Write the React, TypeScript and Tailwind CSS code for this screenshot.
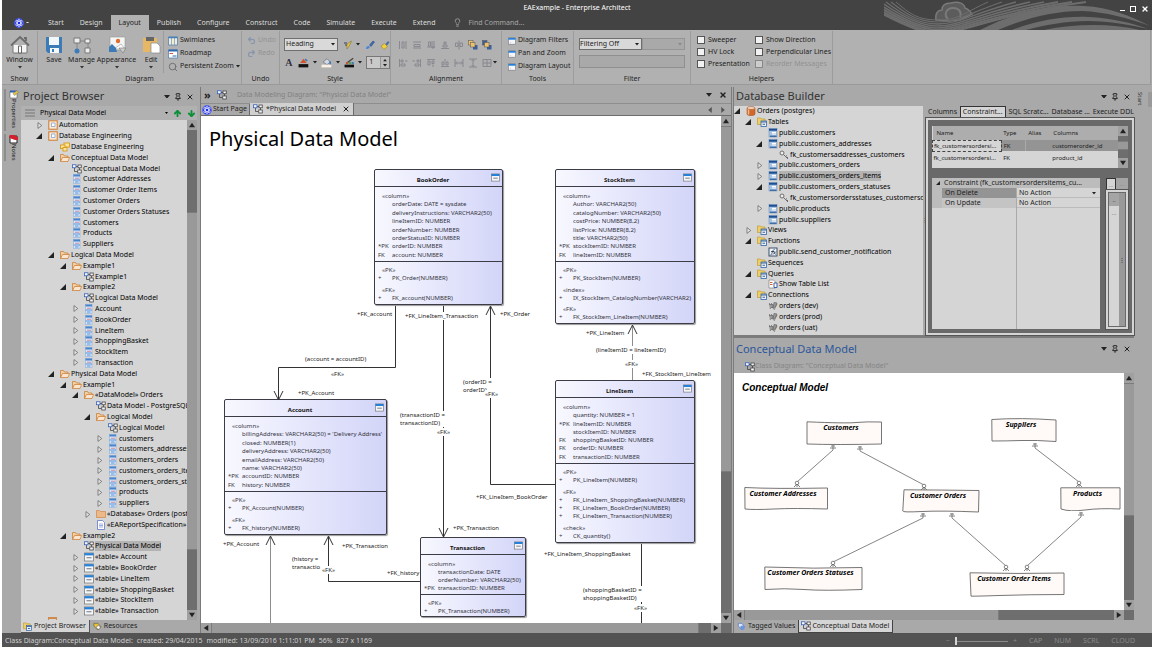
import type { ReactNode } from 'react';
import { ArrowDown, ArrowUp, Lightbulb, Pin, Redo2, Search, Undo2, X } from 'lucide-react';
import clsx from 'clsx';

type IconName =
  | 'diagram' | 'class' | 'folder' | 'folderClosed' | 'model' | 'package' | 'table' | 'doc' | 'logo'
  | 'db' | 'dbFolder' | 'dbTable' | 'key' | 'func' | 'query' | 'plug' | 'window';

interface TreeNode {
  depth: number;
  icon: IconName;
  label: string;
  arrow?: 'open' | 'closed';
  selected?: boolean;
}

const node = (depth: number, icon: IconName, label: string, arrow?: 'open' | 'closed', selected = false): TreeNode => ({
  depth, icon, label, arrow, selected,
});

const PROJECT_TREE: TreeNode[] = [
  node(0, 'model', 'Automation', 'closed'),
  node(0, 'model', 'Database Engineering', 'open'),
  node(1, 'package', 'Database Engineering'),
  node(1, 'folder', 'Conceptual Data Model', 'open'),
  node(2, 'diagram', 'Conceptual Data Model'),
  node(2, 'class', 'Customer Addresses'),
  node(2, 'class', 'Customer Order Items'),
  node(2, 'class', 'Customer Orders'),
  node(2, 'class', 'Customer Orders Statuses'),
  node(2, 'class', 'Customers'),
  node(2, 'class', 'Products'),
  node(2, 'class', 'Suppliers'),
  node(1, 'folder', 'Logical Data Model', 'open'),
  node(2, 'folder', 'Example1', 'open'),
  node(3, 'diagram', 'Example1'),
  node(2, 'folder', 'Example2', 'open'),
  node(3, 'diagram', 'Logical Data Model'),
  node(3, 'class', 'Account', 'closed'),
  node(3, 'class', 'BookOrder', 'closed'),
  node(3, 'class', 'LineItem', 'closed'),
  node(3, 'class', 'ShoppingBasket', 'closed'),
  node(3, 'class', 'StockItem', 'closed'),
  node(3, 'class', 'Transaction', 'closed'),
  node(1, 'folder', 'Physical Data Model', 'open'),
  node(2, 'folder', 'Example1', 'open'),
  node(3, 'folder', '«DataModel» Orders', 'open'),
  node(4, 'diagram', 'Data Model - PostgreSQL'),
  node(4, 'folder', 'Logical Model', 'open'),
  node(5, 'diagram', 'Logical Model'),
  node(5, 'class', 'customers', 'closed'),
  node(5, 'class', 'customers_addresses', 'closed'),
  node(5, 'class', 'customers_orders', 'closed'),
  node(5, 'class', 'customers_orders_items', 'closed'),
  node(5, 'class', 'customers_orders_statuses', 'closed'),
  node(5, 'class', 'products', 'closed'),
  node(5, 'class', 'suppliers', 'closed'),
  node(4, 'folderClosed', '«Database» Orders (postgres)', 'closed'),
  node(4, 'doc', '«EAReportSpecification» -'),
  node(2, 'folder', 'Example2', 'open'),
  node(3, 'diagram', 'Physical Data Model', undefined, true),
  node(3, 'table', '«table» Account', 'closed'),
  node(3, 'table', '«table» BookOrder', 'closed'),
  node(3, 'table', '«table» LineItem', 'closed'),
  node(3, 'table', '«table» ShoppingBasket', 'closed'),
  node(3, 'table', '«table» StockItem', 'closed'),
  node(3, 'table', '«table» Transaction', 'closed'),
];

const DB_TREE: TreeNode[] = [
  node(0, 'db', 'Orders (postgres)', 'open'),
  node(1, 'dbFolder', 'Tables', 'open'),
  node(2, 'dbTable', 'public.customers'),
  node(2, 'dbTable', 'public.customers_addresses', 'open'),
  node(3, 'key', 'fk_customersaddresses_customers'),
  node(2, 'dbTable', 'public.customers_orders', 'closed'),
  node(2, 'dbTable', 'public.customers_orders_items', 'closed', true),
  node(2, 'dbTable', 'public.customers_orders_statuses', 'open'),
  node(3, 'key', 'fk_customersordersstatuses_customersorders'),
  node(2, 'dbTable', 'public.products', 'closed'),
  node(2, 'dbTable', 'public.suppliers'),
  node(1, 'dbFolder', 'Views', 'closed'),
  node(1, 'dbFolder', 'Functions', 'open'),
  node(2, 'func', 'public.send_customer_notification'),
  node(1, 'dbFolder', 'Sequences'),
  node(1, 'dbFolder', 'Queries', 'open'),
  node(2, 'query', 'Show Table List'),
  node(1, 'dbFolder', 'Connections', 'open'),
  node(2, 'plug', 'orders (dev)'),
  node(2, 'plug', 'orders (prod)'),
  node(2, 'plug', 'orders (uat)'),
];

const Icon = ({ name, className = 'size-[10px]' }: { name: IconName; className?: string }) => (
  <svg viewBox="0 0 20 20" className={clsx('shrink-0', className)} aria-hidden="true">
    {name === 'diagram' && (
      <g fill="#f4f6fb" stroke="#444" strokeWidth="1.6">
        <path d="M7 5h5M5 8v7h6M15 8v4" fill="none" />
        <rect x="1" y="1.5" width="7" height="6" stroke="#3a62b8" />
        <rect x="12" y="2" width="6.5" height="5.5" />
        <rect x="11.5" y="12" width="7" height="6" />
      </g>
    )}
    {name === 'class' && (
      <g>
        <rect x="3" y="1" width="13" height="18" fill="#d6e6fa" stroke="#7fa8d8" />
        <path d="M3 3h13" stroke="#4a84cc" strokeWidth="4" />
        <path d="M6 8.500h8" stroke="#d88a96" strokeWidth="2" />
        <path d="M3 12h13" stroke="#5b93d4" strokeWidth="2" />
        <path d="M6 16h7" stroke="#5b93d4" strokeWidth="2" />
      </g>
    )}
    {name === 'folder' && (
      <g stroke="#c9772c" strokeWidth="1.4" strokeLinejoin="round">
        <path d="M1 17V3h6l2 3h7v4" fill="#f2cfa5" />
        <path d="M1 17l4-8h14l-3 8z" fill="#fae6cf" />
      </g>
    )}
    {name === 'folderClosed' && <path d="M1 17V3h6l2 2h10v12z" fill="#ebb98a" stroke="#cf8748" strokeWidth="1.4" />}
    {name === 'model' && (
      <g>
        <rect x="1.5" y="1.5" width="17" height="17" fill="#fbe9d6" stroke="#d08a4c" strokeWidth="2.4" />
        <path d="M7 6h7v7H7z" fill="#fff" stroke="#7f9fc9" strokeWidth="1.5" />
      </g>
    )}
    {name === 'package' && (
      <g fill="#ffe49a" stroke="#d79a1c" strokeWidth="1.8">
        <rect x="8" y="2" width="11" height="8" />
        <rect x="1" y="6" width="9" height="7" />
        <rect x="6" y="11" width="8" height="7" />
      </g>
    )}
    {(name === 'table' || name === 'window') && (
      <g>
        <rect x="1" y="2" width="18" height="16" fill="#f3f6fb" stroke="#777" strokeWidth="1.5" />
        <path d="M1 4.500h18" stroke="#2580d8" strokeWidth="4.5" />
        <path d={name === 'table' ? 'M5 11.500h10' : 'M5 14h1'} stroke="#666" strokeWidth="1.8" />
      </g>
    )}
    {name === 'doc' && (
      <g>
        <path d="M3 1h10l4 4v14H3z" fill="#fff" stroke="#5a6fc0" strokeWidth="1.5" />
        <path d="M6 8h8M6 11h8M6 14h8" stroke="#7d90d8" strokeWidth="1.5" />
      </g>
    )}
    {name === 'logo' && (
      <g fill="none" stroke="#dfe4ff" strokeWidth="1.5">
        <circle cx="10" cy="10" r="9" fill="#1d2be0" stroke="#5b6bff" />
        <ellipse cx="10" cy="10" rx="7.5" ry="3.2" transform="rotate(35 10 10)" />
        <ellipse cx="10" cy="10" rx="7.5" ry="3.2" transform="rotate(-35 10 10)" />
        <ellipse cx="10" cy="10" rx="7.5" ry="3.2" transform="rotate(90 10 10)" />
      </g>
    )}
    {name === 'db' && (
      <g>
        <path d="M2 4v12c0 4 16 4 16 0V4z" fill="#d0692a" stroke="#9c4714" />
        <path d="M5 6v11" stroke="#f5b68c" strokeWidth="3" />
        <ellipse cx="10" cy="4" rx="8" ry="3" fill="#f6d4bd" stroke="#9c4714" />
      </g>
    )}
    {name === 'dbFolder' && (
      <g>
        <path d="M1 15V2h6l2 2h7v11z" fill="#f0cf62" stroke="#b8902a" strokeWidth="1.2" />
        <rect x="8" y="8" width="11" height="11" fill="#e8f0fa" stroke="#35639f" strokeWidth="1.6" />
        <path d="M8 10h11M11 14.500h5" stroke="#35639f" strokeWidth="2" />
      </g>
    )}
    {name === 'dbTable' && (
      <g>
        <rect x="2" y="1" width="16" height="17" fill="#a9c4e4" stroke="#5f86b8" />
        <path d="M2 3.500h16" stroke="#1f4f91" strokeWidth="4" />
        <path d="M8 9h8M8 12h8" stroke="#fff" strokeWidth="2" />
        <path d="M4 16.500h13" stroke="#35639f" strokeWidth="2.5" />
      </g>
    )}
    {name === 'key' && (
      <g fill="none" stroke="#6d6d6d" strokeWidth="2">
        <circle cx="6" cy="6" r="4" fill="#eee" />
        <path d="M9 9l9 9M13 13l3-2M16 16l2-2" />
      </g>
    )}
    {name === 'func' && (
      <g>
        <rect x="2" y="2" width="16" height="16" fill="#eef3fa" stroke="#2a3f5c" strokeWidth="1.8" />
        <path d="M5 16c3 1 4-12 8-11M6 9h7M10 15l6-6M11 9l4 6" fill="none" stroke="#22364f" strokeWidth="1.6" />
      </g>
    )}
    {name === 'query' && (
      <g>
        <path d="M2 2h9l4 4v12H2z" fill="#fff" stroke="#777" strokeWidth="1.3" />
        <path d="M4 7h5M4 11h5" stroke="#d0643a" strokeWidth="2" />
        <path d="M12 8h6v9h-6z" fill="#fff" stroke="#3b5fa8" strokeWidth="2" />
      </g>
    )}
    {name === 'plug' && (
      <g fill="#9a9a9a" stroke="#666" strokeWidth="1.4">
        <path d="M2 7h8v6H6L4 16M12 3l6 1-3 7-5 4z" />
        <path d="M3 4v3M7 4v3M12 18l6-12" />
      </g>
    )}
  </svg>
);

const Caret = ({ className = 'w-[4px]' }: { className?: string }) => (
  <svg viewBox="0 0 8 5" className={clsx('shrink-0', className)} aria-hidden="true">
    <path d="M0 0h8L4 5z" fill="currentColor" />
  </svg>
);

const Tree = ({ nodes, step }: { nodes: TreeNode[]; step: number }) => (
  <ul className="flex min-w-0 flex-1 flex-col">
    {nodes.map((n, i) => (
      <li
        key={i}
        className="flex min-h-0 flex-1 items-center overflow-hidden whitespace-nowrap"
        style={{ paddingLeft: n.depth * step }}
      >
        <span className="flex w-3 shrink-0 items-center">
          {n.arrow === 'open' && (
            <svg viewBox="0 0 10 10" className="size-[6px]"><path d="M10 0v10H0z" fill="#222" /></svg>
          )}
          {n.arrow === 'closed' && (
            <svg viewBox="0 0 10 12" className="ml-px h-[7px] w-[6px]"><path d="M1.500 1v10L8 6z" fill="#e4e4e4" stroke="#666" strokeWidth="1.3" /></svg>
          )}
        </span>
        <Icon name={n.icon} />
        <span className={clsx('ml-px leading-[10px]', n.selected && 'bg-[#b3b3b3]')}>{n.label}</span>
      </li>
    ))}
  </ul>
);

const ScrollArrow = ({ dir }: { dir: 'up' | 'down' | 'left' | 'right' }) => (
  <button type="button" aria-label={`Scroll ${dir}`} className="flex size-[10px] shrink-0 items-center justify-center bg-[#a0a0a0]">
    <svg viewBox="0 0 8 8" className={clsx('size-[6px]', { 'rotate-180': dir === 'down', '-rotate-90': dir === 'left', 'rotate-90': dir === 'right' })}>
      <path d="M0 7h8L4 1z" fill="#222" />
    </svg>
  </button>
);

const VScroll = ({ before = 'flex-none', thumb, after }: { before?: string; thumb: string; after: string }) => (
  <div className="flex w-[10px] shrink-0 flex-col bg-[#6e6e6e]">
    <ScrollArrow dir="up" />
    <div className={before} />
    <div className={clsx('border-y border-[#7c7c7c] bg-[#999]', thumb)} />
    <div className={after} />
    <ScrollArrow dir="down" />
  </div>
);

const HScroll = ({ thumb, after }: { thumb: string; after: string }) => (
  <div className="mr-[10px] flex h-[10px] shrink-0 bg-[#6e6e6e] outline-[#6e6e6e]">
    <ScrollArrow dir="left" />
    <div className={clsx('border-x border-[#7c7c7c] bg-[#999]', thumb)} />
    <div className={after} />
    <ScrollArrow dir="right" />
  </div>
);

const PanelButtons = () => (
  <div className="flex items-center gap-1 pr-[3px] text-[#222]">
    <button type="button" aria-label="Panel options"><Caret className="w-[6px]" /></button>
    <button type="button" aria-label="Pin panel"><Pin className="size-[8px]" strokeWidth={3} /></button>
    <button type="button" aria-label="Close panel"><X className="size-[8px]" strokeWidth={3} /></button>
  </div>
);

/* ---------- title bar and ribbon ---------- */

const MENU = ['Start', 'Design', 'Layout', 'Publish', 'Configure', 'Construct', 'Code', 'Simulate', 'Execute', 'Extend'];
const BOWLS = [0, 1, 2, 3, 4, 5, 6, 7];

const HeaderArt = () => (
  <svg viewBox="0 0 268 30" className="absolute right-0 top-0 h-[30px] w-[268px]" fill="none" aria-hidden="true">
    <path d="M52 20c-1-7 2-10 6-10 0-5 4-7 9-7 7-2 13 0 14 5 4 1 5 4 7 6l-12 6-12 1z" fill="#5c5c5c" stroke="#7a7a7a" strokeWidth="1.5" />
    <path d="M64 19c-5-5-1-11 5-11s9 4 7 9" stroke="#7a7a7a" strokeWidth="2" />
    <g stroke="#6d6d6d">
      {BOWLS.map(k => (
        <path
          key={k}
          d={`M${12 - 5 * k} 2C${26 - 4 * k} 14 34 ${20 + k * 2} 54 ${20 + k * 2}S${78 + 5 * k} 14 ${104 + 14 * k} 2`}
          strokeWidth={1 + k / 6}
        />
      ))}
    </g>
    <g fill="#6d6d6d">
      <path d="M96 30C130 12 168 4 200 6c26 1 46 10 66 20-22-8-44-14-68-15-30 0-58 8-84 19z" />
      <path d="M128 30c24-9 50-14 76-13 24 1 44 6 60 12-18-4-38-8-60-8-22 0-44 4-62 9z" />
      <path d="M160 30c30-6 66-7 96 0z" />
    </g>
  </svg>
);

const Header = () => (
  <header className="relative flex h-[30px] shrink-0 flex-col overflow-hidden bg-[#434343] text-[#dcdcdc]">
    <HeaderArt />
    <div className="relative flex h-[15px] items-center justify-center pt-[2px] text-[7px] text-white">
      <h1>EAExample - Enterprise Architect</h1>
      <div className="absolute right-[3px] flex items-center gap-[5px]">
        <button type="button" aria-label="Minimize"><span className="mt-[4px] block h-px w-[5px] bg-white" /></button>
        <button type="button" aria-label="Maximize"><span className="block size-[6px] border border-white" /></button>
        <button type="button" aria-label="Close"><X className="size-[8px]" strokeWidth={4} /></button>
      </div>
    </div>
    <nav className="relative flex h-[15px] items-center text-[7px]">
      <button type="button" className="flex w-[38px] items-center gap-[2px] pl-[12px]" aria-label="Application menu">
        <Icon name="logo" /><Caret className="w-[3px]" />
      </button>
      {MENU.map(m => (
        <button
          key={m}
          type="button"
          className={clsx('flex h-full items-center px-2 pt-[2px]', m === 'Layout' && 'bg-[#b1b1b1] text-[#1c1c1c]')}
        >
          {m}
        </button>
      ))}
      <Lightbulb className="ml-[10px] size-[9px] text-[#aaa]" />
      <input aria-label="Find command" placeholder="Find Command..." className="ml-[6px] w-[80px] bg-transparent pt-[2px] outline-none placeholder:text-[#a8a8a8]" />
    </nav>
  </header>
);

const Group = ({ title, width, children }: { title: string; width: string; children: ReactNode }) => (
  <section className={clsx('flex shrink-0 flex-col border-r border-[#9c9c9c]', width)}>
    <div className="flex h-[42px] min-w-0 shrink-0">{children}</div>
    <h2 className="text-center leading-[11px]">{title}</h2>
  </section>
);

const BigButton = ({ label, caret, width, children }: { label: string; caret?: boolean; width: string; children: ReactNode }) => (
  <button type="button" className={clsx('flex shrink-0 flex-col items-center self-start pt-1', width)}>
    <svg viewBox="0 0 20 20" className="size-[20px]" aria-hidden="true">{children}</svg>
    <span className="leading-[10px]">{label}</span>
    {caret && <Caret className="mt-px w-[4px] text-[#333]" />}
  </button>
);

const SmallButton = ({ icon, label, caret, className }: { icon: ReactNode; label: string; caret?: boolean; className?: string }) => (
  <button type="button" className={clsx('flex h-[13px] items-center gap-[2px] whitespace-nowrap', className)}>
    {icon}{label}{caret && <Caret className="w-[4px]" />}
  </button>
);

const ALIGN_ICONS = [
  'M3 2v16M8 4h4v12H8zM16 2v16', 'M2 16h16M4 9h12v4H4zM2 4h16', 'M2 14h16M5 4v8h4V4zM12 2v14h4V2',
  'M2 17h16M6 10h8v4H6zM8 4h4v4H8z', 'M10 1v18M3 6h5v7H3zM12 6h5v7h-5z',
];
const SPACE_ICONS = [
  'M3 2v16M6 4h4v4H6zM6 12h8v4H6zM14 6h5', 'M17 2v16M10 4h4v4h-4zM6 12h8v4H6zM1 6h5', 'M2 3h16M4 6h4v8H4zM12 6h4v5h-4zM14 13v5',
  'M2 17h16M4 8h4v6H4zM12 8h4v6h-4zM10 2v5', 'M2 2v16M18 2v16M3 10h14M6 7l-3 3 3 3M14 7l3 3-3 3', 'M2 2h16M2 18h16M10 3v14M7 6l3-3 3 3M7 14l3 3 3-3',
];

const LineIcon = ({ d }: { d: string }) => (
  <button type="button" aria-label="Align elements">
    <svg viewBox="0 0 20 20" className="size-[10px]"><path d={d} fill="none" stroke="#84848c" strokeWidth="1.8" /></svg>
  </button>
);

const StackIcon = ({ front }: { front?: boolean }) => (
  <button type="button" aria-label={front ? 'Bring to front' : 'Send to back'}>
    <svg viewBox="0 0 20 20" className="size-[10px]">
      <rect x="1" y="1" width="9" height="9" fill={front ? '#efc06a' : '#3b5f98'} stroke="#555" />
      <rect x="10" y="10" width="9" height="9" fill="#3b5f98" />
      <rect x="5" y="5" width="9" height="9" fill="#efc06a" stroke="#555" />
    </svg>
  </button>
);

const Check = ({ label, disabled }: { label: string; disabled?: boolean }) => (
  <label className={clsx('flex h-[12px] items-center gap-[3px] whitespace-nowrap', disabled && 'text-[#919191]')}>
    <input type="checkbox" disabled={disabled} className="size-[8px] shrink-0 appearance-none border border-[#555] bg-[#f2f2f2] disabled:border-[#888] disabled:bg-[#ccc]" />
    {label}
  </label>
);

const Ribbon = () => (
  <div className="mr-px flex h-[55px] shrink-0 border-b border-r border-[#9a9a9a] bg-[#b1b1b1] pt-px text-[7px] text-[#1e1e1e]">
    <Group title="Show" width="w-[36px]">
      <BigButton label="Window" caret width="w-full">
        <path d="M3 10v8h14v-8" fill="#f4f4f4" stroke="#777" />
        <path d="M1 10.500L10 2l9 8.500M14 3h2v3" fill="none" stroke="#6b6b6b" strokeWidth="1.8" />
        <path d="M8.500 11h3v7h-3z" fill="#fff" stroke="#666" />
      </BigButton>
    </Group>
    <Group title="Diagram" width="w-[204px]">
      <BigButton label="Save" width="w-[32px]">
        <path d="M2 2h16v16H4l-2-2z" fill="#3b7cb8" />
        <path d="M5 2h10v8H5zM6 13h9v5H6z" fill="#f4f7fa" />
        <path d="M8 14h2v3H8z" fill="#3b7cb8" />
      </BigButton>
      <BigButton label="Manage" caret width="w-[23px]">
        <path d="M8 6h7M5 8v6M16 8v6" stroke="#888" fill="none" />
        <path d="M2 3h6v5H2zM13 4h5v4h-5zM13 13h5v5h-5z" fill="#eee" stroke="#777" />
        <circle cx="5" cy="16" r="2.5" fill="#3b7cb8" />
      </BigButton>
      <BigButton label="Appearance" caret width="w-[47px]">
        <path d="M3 2h15v13H3z" fill="#f5f5f5" stroke="#999" strokeWidth=".6" />
        <path d="M7 14l7-5 4 5z" fill="#fff" stroke="#999" strokeWidth=".6" />
        <circle cx="11" cy="6" r="2.2" fill="#dd6f32" />
        <path d="M2 17v-5l3-3 4 4 1 4z" fill="#3b7cb8" />
        <path d="M12 13h7l-3 5z" fill="#ccc" stroke="#777" strokeWidth=".6" />
      </BigButton>
      <BigButton label="Edit" caret width="w-[22px]">
        <path d="M2 3h14v14H2z" fill="#e6b866" />
        <path d="M5 2h8v4H5z" fill="#666" />
        <path d="M10 8h6l3 3v7h-9z" fill="#fff" stroke="#888" strokeWidth=".7" />
      </BigButton>
      <div className="ml-px flex flex-col border-l border-[#9c9c9c] pl-1 pt-[3px]">
        <SmallButton
          label="Swimlanes"
          icon={<svg viewBox="0 0 20 20" className="size-[10px]"><path d="M1 2h18v16H1z" fill="#f3ecd2" stroke="#4b7fb8" strokeWidth="1.5" /><path d="M7 3v15M13 3v15" stroke="#6f9cc8" strokeWidth="1.5" /><path d="M1 3h18" stroke="#4b7fb8" strokeWidth="3" /></svg>}
        />
        <SmallButton
          label="Roadmap"
          icon={<svg viewBox="0 0 20 20" className="size-[10px]"><path d="M1 2h18v16H1z" fill="#fff" stroke="#4b7fb8" strokeWidth="1.5" /><path d="M1 3h18" stroke="#2f69ad" strokeWidth="4" /><path d="M3 9h7" stroke="#d05a4a" strokeWidth="2" /><path d="M9 14h8" stroke="#2f69ad" strokeWidth="2" /></svg>}
        />
        <SmallButton label="Persistent Zoom" caret icon={<Search className="size-[10px] text-[#666]" />} />
      </div>
    </Group>
    <Group title="Undo" width="w-[38px]">
      <div className="flex flex-col pl-[5px] pt-[3px] text-[#929292]">
        <SmallButton label="Undo" icon={<Undo2 className="size-[9px] text-[#8795ad]" strokeWidth={3} />} />
        <SmallButton label="Redo" icon={<Redo2 className="size-[9px] text-[#8795ad]" strokeWidth={3} />} />
      </div>
    </Group>
    <Group title="Style" width="w-[111px]">
      <div className="flex w-full flex-col gap-[5px] pl-1 pt-[7px]">
        <div className="flex h-[13px] items-center gap-[5px]">
          <div className="relative h-[13px] w-[54px]">
            <select aria-label="Style preset" className="size-full appearance-none border border-[#6f6f6f] bg-[#d9d9d9] pl-px">
              <option>Heading</option>
            </select>
            <Caret className="pointer-events-none absolute right-[3px] top-[5px] w-[4px]" />
          </div>
          <svg viewBox="0 0 20 20" className="size-[10px]"><path d="M2 6h6M4 10h6" stroke="#2d3f66" strokeWidth="2" /><path d="M8 18V8l9-6-4 9z" fill="#e6c33c" stroke="#7d6a2b" /></svg>
          <Caret className="-ml-[2px] w-[4px]" />
          <svg viewBox="0 0 20 20" className="size-[10px]"><path d="M9 10l7-8 3 2-7 9z" fill="#3c6db8" stroke="#27457a" /><path d="M2 18c0-5 3-7 6-6 3 2 1 6-6 6z" fill="#4c86d8" /></svg>
          <svg viewBox="0 0 20 20" className="size-[10px]"><path d="M10 9l6-7 3 3-6 7z" fill="#4d6ea5" /><path d="M2 12l7-5 6 6-7 6z" fill="#f0cf3b" stroke="#8d7820" /></svg>
        </div>
        <div className="flex h-[13px] items-center gap-1">
          <span className="w-[10px] text-center font-['Liberation_Serif',serif] text-[10px] font-bold text-[#334]">A</span>
          <svg viewBox="0 0 20 20" className="size-[11px]"><path d="M4 11l6-8 6 8z" fill="#d2502e" /><path d="M13 4l4 3" stroke="#3b7cb8" strokeWidth="3" /><path d="M1 13h18v6H1z" fill="#111" /></svg>
          <Caret />
          <svg viewBox="0 0 20 20" className="size-[11px]"><path d="M4 9l7-6 6 6-6 5z" fill="#cfd9e8" stroke="#555" /><path d="M17 8v6" stroke="#3b7cb8" strokeWidth="3" /><path d="M1 14h18v5H1z" fill="#fbf0e4" /></svg>
          <Caret />
          <svg viewBox="0 0 20 20" className="size-[11px]"><path d="M4 12L17 2" stroke="#444" strokeWidth="2.5" /><path d="M4 9h4v4H4z" fill="#d2502e" /><path d="M9 9h4v4H9z" fill="#4ca64c" /><path d="M14 9h4v4h-4z" fill="#3b7cb8" /><path d="M1 14h18v5H1z" fill="#111" /></svg>
          <Caret />
          <div className="flex h-[13px] w-[24px] border border-[#777] bg-[#c9c9c9]">
            <input aria-label="Line width" defaultValue="1" className="w-[13px] pl-[2px] outline-none" />
            <div className="flex flex-1 flex-col items-center justify-center gap-[3px] border-l border-[#999] bg-[#bdbdbd]">
              <Caret className="w-[4px] rotate-180" /><Caret className="w-[4px]" />
            </div>
          </div>
        </div>
      </div>
    </Group>
    <Group title="Alignment" width="w-[111px]">
      <div className="flex flex-col gap-[7px] pl-[7px] pt-2">
        <div className="flex h-[11px] items-center gap-1">
          {ALIGN_ICONS.map(d => <LineIcon key={d} d={d} />)}
          <StackIcon front /><StackIcon />
        </div>
        <div className="flex h-[11px] items-center gap-1">
          {SPACE_ICONS.map(d => <LineIcon key={d} d={d} />)}
          <LineIcon d="M2 3h16v14H2zM10 3v14M2 10h16" />
          <Caret className="-ml-[3px] w-[4px]" />
        </div>
      </div>
    </Group>
    <Group title="Tools" width="w-[72px]">
      <div className="flex flex-col pl-[6px] pt-[3px]">
        {['Diagram Filters', 'Pan and Zoom', 'Diagram Layout'].map(t => (
          <SmallButton key={t} label={t} icon={<Icon name="window" className="size-[8px]" />} />
        ))}
      </div>
    </Group>
    <Group title="Filter" width="w-[117px]">
      <div className="flex w-full flex-col gap-[5px] px-[5px] pt-[7px]">
        <div className="flex h-[12px]">
          <div className="relative w-[63px]">
            <select aria-label="Filter mode" className="block size-full appearance-none border border-[#6f6f6f] bg-[#d9d9d9]">
              <option>Filtering Off</option>
            </select>
            <Caret className="pointer-events-none absolute right-[3px] top-[5px] w-[4px]" />
          </div>
          <div className="relative flex-1">
            <select aria-label="Filter name" disabled className="block size-full appearance-none border border-[#959595] bg-[#a9a9a9]" />
            <Caret className="pointer-events-none absolute right-[3px] top-[5px] w-[4px] text-[#888]" />
          </div>
        </div>
        <input aria-label="Filter text" disabled className="h-[13px] w-full border border-[#8f8f8f] bg-[#a9a9a9]" />
      </div>
    </Group>
    <Group title="Helpers" width="w-[142px]">
      <div className="grid grid-cols-[56px_1fr] content-start gap-x-[2px] pl-[6px] pt-[3px]">
        <Check label="Sweeper" /><Check label="Show Direction" />
        <Check label="HV Lock" /><Check label="Perpendicular Lines" />
        <Check label="Presentation" /><Check label="Reorder Messages" disabled />
      </div>
    </Group>
  </div>
);

/* ---------- left side ---------- */

const SideTabs = () => (
  <aside className="flex w-[19px] shrink-0 flex-col gap-[3px] pl-[2px] pt-[2px] text-[6px] text-[#222]">
    <button type="button" className="flex flex-col items-center border-l-2 border-[#8d8d8d] pb-[3px]">
      <svg viewBox="0 0 20 20" className="size-[10px]"><path d="M2 5h14v13H2z" fill="#fff" stroke="#444" /><path d="M2 5h14" stroke="#2f5fae" strokeWidth="4" /><path d="M8 9l8-6 3 4-8 6z" fill="#e2c33e" stroke="#776" /></svg>
      <span className="leading-[10px] [writing-mode:vertical-rl]">Properties</span>
    </button>
    <button type="button" className="flex flex-col items-center border-l-2 border-[#8d8d8d]">
      <svg viewBox="0 0 20 20" className="size-[10px]"><path d="M2 4h14v14H2z" fill="#fff" stroke="#222" strokeWidth="2" /><path d="M1 2h9l8 5v5h-6L1 8z" fill="#d3202c" /></svg>
      <span className="leading-[10px] [writing-mode:vertical-rl]">Notes</span>
    </button>
  </aside>
);

const ProjectBrowser = () => (
  <section className="flex w-[176px] shrink-0 flex-col">
    <div className="flex h-[19px] shrink-0 items-center justify-between pl-[2px]">
      <h2 className="text-[11px] text-[#333]">Project Browser</h2>
      <PanelButtons />
    </div>
    <div className="flex h-[14px] shrink-0 items-center gap-[5px] bg-[#b1b1b1] pl-[4px] text-[7px]">
      <svg viewBox="0 0 10 8" className="w-[10px]"><path d="M0 1h10M0 4h10M0 7h10" stroke="#777" /></svg>
      <span className="flex-1">Physical Data Model</span>
      <Caret className="w-[3px]" />
      <ArrowUp className="size-[9px] text-[#0c8f38]" strokeWidth={5} />
      <ArrowDown className="mr-px size-[9px] text-[#0c8f38]" strokeWidth={5} />
    </div>
    <div className="flex min-h-0 flex-1 text-[7px]">
      <div className="flex min-w-0 flex-1 flex-col overflow-hidden bg-[#d5d5d5] pl-[15px]">
        <Tree nodes={PROJECT_TREE} step={12} />
        <div className="ml-3 h-[3px] w-[9px] shrink-0 border-x border-t-2 border-[#d08a4c]" />
      </div>
      <VScroll before="h-[82px]" thumb="flex-1" after="h-[60px]" />
    </div>
    <div className="flex h-[13px] shrink-0 items-start text-[7px] text-[#1e1e1e]">
      <button type="button" className="flex h-[13px] items-center gap-[2px] border-b border-r border-[#555] bg-[#d5d5d5] pl-[2px] pr-[3px]">
        <Icon name="dbFolder" className="size-[9px]" />Project Browser
      </button>
      <button type="button" className="flex h-[13px] items-center gap-[2px] pl-[3px]">
        <svg viewBox="0 0 20 20" className="size-[9px]"><path d="M2 3h9l7 8-7 7-9-9z" fill="#e6c33c" stroke="#333" /><circle cx="12" cy="12" r="4" fill="#fff" stroke="#444" /></svg>
        Resources
      </button>
    </div>
  </section>
);

/* ---------- physical diagram ---------- */

interface Entity {
  name: string;
  box: string;
  colsHeight: string;
  columns: [string, string][];
  groups: { kind: string; ops: string[] }[];
}

const ENTITIES: Entity[] = [
  {
    name: 'BookOrder', box: 'left-[173px] top-[53px] w-[129px] h-[136px]', colsHeight: 'h-[75px]',
    columns: [
      ['', 'orderDate: DATE = sysdate'], ['', 'deliveryInstructions: VARCHAR2(50)'], ['', 'lineItemID: NUMBER'],
      ['', 'orderNumber: NUMBER'], ['', 'orderStatusID: NUMBER'], ['*PK', 'orderID: NUMBER'], ['FK', 'account: NUMBER'],
    ],
    groups: [{ kind: 'PK', ops: ['PK_Order(NUMBER)'] }, { kind: 'FK', ops: ['FK_account(NUMBER)'] }],
  },
  {
    name: 'StockItem', box: 'left-[354px] top-[53px] w-[140px] h-[155px]', colsHeight: 'h-[75px]',
    columns: [
      ['', 'Author: VARCHAR2(50)'], ['', 'catalogNumber: VARCHAR2(50)'], ['', 'costPrice: NUMBER(8,2)'],
      ['', 'listPrice: NUMBER(8,2)'], ['', 'title: VARCHAR2(50)'], ['*PK', 'stockItemID: NUMBER'], ['FK', 'lineItemID: NUMBER'],
    ],
    groups: [
      { kind: 'PK', ops: ['PK_StockItem(NUMBER)'] },
      { kind: 'index', ops: ['IX_StockItem_CatalogNumber(VARCHAR2)'] },
      { kind: 'FK', ops: ['FK_StockItem_LineItem(NUMBER)'] },
    ],
  },
  {
    name: 'Account', box: 'left-[23px] top-[283px] w-[163px] h-[136px]', colsHeight: 'h-[75px]',
    columns: [
      ['', "billingAddress: VARCHAR2(50) = 'Delivery Address'"], ['', 'closed: NUMBER(1)'], ['', 'deliveryAddress: VARCHAR2(50)'],
      ['', 'emailAddress: VARCHAR2(50)'], ['', 'name: VARCHAR2(50)'], ['*PK', 'accountID: NUMBER'], ['FK', 'history: NUMBER'],
    ],
    groups: [{ kind: 'PK', ops: ['PK_Account(NUMBER)'] }, { kind: 'FK', ops: ['FK_history(NUMBER)'] }],
  },
  {
    name: 'LineItem', box: 'left-[354px] top-[264px] w-[140px] h-[163px]', colsHeight: 'h-[66px]',
    columns: [
      ['', 'quantity: NUMBER = 1'], ['*PK', 'lineItemID: NUMBER'], ['', 'stockItemID: NUMBER'],
      ['FK', 'shoppingBasketID: NUMBER'], ['FK', 'orderID: NUMBER'], ['FK', 'transactionID: NUMBER'],
    ],
    groups: [
      { kind: 'PK', ops: ['PK_LineItem(NUMBER)'] },
      { kind: 'FK', ops: ['FK_LineItem_ShoppingBasket(NUMBER)', 'FK_LineItem_BookOrder(NUMBER)', 'FK_LineItem_Transaction(NUMBER)'] },
      { kind: 'check', ops: ['CK_quantity()'] },
    ],
  },
  {
    name: 'Transaction', box: 'left-[219px] top-[421px] w-[106px] h-[80px]', colsHeight: 'h-[40px]',
    columns: [['', 'transactionDate: DATE'], ['', 'orderNumber: VARCHAR2(50)'], ['*PK', 'transactionID: NUMBER']],
    groups: [{ kind: 'PK', ops: ['PK_Transaction(NUMBER)'] }],
  },
];

const EntityBox = ({ entity }: { entity: Entity }) => (
  <div className={clsx('absolute flex flex-col overflow-hidden rounded-[2px] border border-[#3c3c46] bg-linear-to-r from-[#f8f8ff] to-[#d3d5f8] text-[6px] leading-[8px] text-[#33333d] shadow-[1px_1px_1px_#999]', entity.box)}>
    <div className="flex h-[17px] shrink-0 items-center border-b border-[#3c3c46] pt-[3px]">
      <h3 className="flex-1 text-center font-bold text-[#111]">{entity.name}</h3>
      <Icon name="table" className="mb-[4px] mr-[2px] size-[9px]" />
    </div>
    <div className={clsx('flex shrink-0 flex-col border-b border-[#3c3c46] pb-[2px] pt-[5px]', entity.colsHeight)}>
      <p className="flex-1 pl-[7px]">«column»</p>
      {entity.columns.map(([key, text]) => (
        <p key={text} className="flex flex-1 whitespace-nowrap">
          <span className="w-[17px] shrink-0 pl-[3px]">{key}</span>{text}
        </p>
      ))}
    </div>
    <div className="flex flex-1 flex-col justify-between pb-[2px] pt-1">
      {entity.groups.map(g => (
        <div key={g.kind}>
          <p className="pl-[7px]">«{g.kind}»</p>
          {g.ops.map(op => (
            <p key={op} className="flex whitespace-nowrap"><span className="w-[17px] shrink-0 pl-[3px]">+</span>{op}</p>
          ))}
        </div>
      ))}
    </div>
  </div>
);

const LINKS: { d: string; head?: string; light?: boolean }[] = [
  { d: 'M194.500 189v62.500H77.500V284', head: 'M73 275l4.500 9 4.500-9' },
  { d: 'M242.500 189v232', head: 'M238 412l4.500 9 4.500-9' },
  { d: 'M289.500 190v178.500H355', head: 'M285 199l4.500-9 4.500 9' },
  { d: 'M431.500 209v55', head: 'M427 218l4.500-9 4.500 9', light: true },
  { d: 'M127.500 420v45.500H220', head: 'M123 429l4.500-9 4.500 9' },
  { d: 'M69.500 420v88', head: 'M65 429l4.500-9 4.500 9', light: true },
  { d: 'M440.500 427v81' },
];

const LABELS: [string, string][] = [
  ['left-[156px] top-[194px]', '+FK_account'],
  ['left-[204px] top-[196px]', '+FK_LineItem_Transaction'],
  ['left-[299px] top-[194px]', '+PK_Order'],
  ['left-[104px] top-[239px]', '(account = accountID)'],
  ['left-[130px] top-[254px]', '«FK»'],
  ['left-[97px] top-[273px]', '+PK_Account'],
  ['left-[385px] top-[213px]', '+PK_LineItem'],
  ['left-[395px] top-[230px]', '(lineItemID = lineItemID)'],
  ['left-[424px] top-[244px]', '«FK»'],
  ['left-[441px] top-[254px]', '+FK_StockItem_LineItem'],
  ['left-[262px] top-[262px]', '(orderID =\norderID)'],
  ['left-[284px] top-[274px]', '«FK»'],
  ['left-[199px] top-[295px]', '(transactionID =\ntransactionID)'],
  ['left-[236px] top-[312px]', '«FK»'],
  ['left-[275px] top-[377px]', '+FK_LineItem_BookOrder'],
  ['left-[252px] top-[408px]', '+PK_Transaction'],
  ['left-[22px] top-[424px]', '+PK_Account'],
  ['left-[141px] top-[426px]', '+PK_Transaction'],
  ['left-[91px] top-[439px]', '(history =\ntransactio'],
  ['left-[121px] top-[450px]', '«FK»'],
  ['left-[186px] top-[453px]', '+FK_history'],
  ['left-[343px] top-[434px]', '+FK_LineItem_ShoppingBasket'],
  ['left-[382px] top-[470px]', '(shoppingBasketID =\nshoppingBasketID)'],
  ['left-[433px] top-[488px]', '«FK»'],
];

const PhysicalDiagram = () => (
  <div className="relative min-w-0 flex-1 overflow-hidden bg-white">
    <h2 className="pl-2 pt-[9px] text-[20px] leading-[27px] text-black">Physical Data Model</h2>
    <svg className="absolute inset-0 size-full" fill="none">
      {LINKS.map(l => (
        <g key={l.d}>
          <path d={l.d} stroke={l.light ? '#8d8d8d' : '#333'} />
          {l.head && <path d={l.head} stroke="#333" />}
        </g>
      ))}
    </svg>
    {LABELS.map(([pos, text]) => (
      <p key={pos} className={clsx('absolute whitespace-pre bg-white text-[6px] leading-[8px] text-[#222]', pos)}>{text}</p>
    ))}
    {ENTITIES.map(e => <EntityBox key={e.name} entity={e} />)}
  </div>
);

const DocumentArea = () => (
  <main className="flex min-w-0 flex-1 flex-col border-l border-[#7a7a7a]">
    <div className="flex h-[17px] shrink-0 items-center border-b border-[#8e8e8e] pl-[3px] text-[7px] text-[#828282]">
      <span className="w-[12px] text-[11px] font-bold leading-[10px] text-[#222]">»</span>
      <Icon name="diagram" className="ml-px size-[10px]" />
      <span className="flex-1 pl-[10px]">Data Modeling Diagram: &quot;Physical Data Model&quot;</span>
      <div className="flex items-center gap-[7px] pr-1 text-[#222]">
        <Caret className="w-[6px]" />
        <button type="button" aria-label="Close document"><X className="size-[8px]" strokeWidth={4} /></button>
      </div>
    </div>
    <div className="flex h-[12px] shrink-0 items-end border-b border-[#6c6c6c] text-[7px] text-[#1e1e1e]">
      <button type="button" className="flex h-[11px] w-[49px] shrink-0 items-center gap-px whitespace-nowrap border-r border-[#6c6c6c] pl-px">
        <Icon name="logo" />Start Page
      </button>
      <button type="button" className="flex h-[12px] w-[104px] shrink-0 items-center gap-[3px] border-r border-[#6c6c6c] bg-[#d0d0d0] pl-[3px] pr-[3px]">
        <Icon name="diagram" className="size-[10px]" />*Physical Data Model <X className="ml-auto size-[8px]" strokeWidth={3} />
      </button>
      <div className="ml-auto flex h-full items-center gap-[7px] pr-[5px] text-[#555]">
        <Caret className="w-[6px] rotate-90" /><Caret className="w-[6px] -rotate-90" />
      </div>
    </div>
    <div className="flex min-h-0 flex-1">
      <PhysicalDiagram />
      <VScroll thumb="flex-[346]" after="flex-[142]" />
    </div>
    <div className="bg-[#6e6e6e]"><HScroll thumb="flex-1" after="w-[12px]" /></div>
  </main>
);

/* ---------- right side ---------- */

const PANE_TABS = ['Columns', 'Constraint...', 'SQL Scratc...', 'Database ...', 'Execute DDL'];

const ConstraintPane = () => (
  <div className="flex w-[208px] shrink-0 flex-col">
    <div className="flex h-[12px] shrink-0 items-center justify-between whitespace-nowrap pl-[2px] text-[7px] text-[#1e1e1e]">
      {PANE_TABS.map(t => (
        <button
          key={t}
          type="button"
          className={clsx('flex h-[12px] items-center', t === 'Constraint...' && 'border border-b-0 border-[#333] bg-[#d5d5d5] px-[2px]')}
        >
          {t}
        </button>
      ))}
    </div>
    <div className="flex min-h-0 flex-1 flex-col gap-[10px] border-2 border-[#d5d5d5] bg-[#696969] p-1 pt-[6px] outline outline-[#555]">
      <div className="flex h-[42px] shrink-0 overflow-hidden bg-[#d5d5d5]">
        <div className="min-w-0 flex-1 overflow-hidden">
          <table className="w-full table-fixed border-collapse whitespace-nowrap text-left text-[6px] leading-[8px] text-[#222]">
            <thead>
              <tr className="h-[14px] bg-[#adadad]">
                <th className="w-[37%] pl-1 font-normal">Name</th>
                <th className="w-[13%] pl-[2px] font-normal">Type</th>
                <th className="w-[13%] pl-[3px] font-normal">Alias</th>
                <th className="pl-1 font-normal">Columns</th>
              </tr>
            </thead>
            <tbody>
              <tr className="h-[11px] bg-[#949494]">
                <td className="border border-dashed border-[#444] bg-[#d5d5d5] pl-px">fk_customersordersi...</td>
                <td className="border-r border-[#aaa] pl-[2px]">FK</td>
                <td />
                <td className="pl-[3px]">customerorder_id</td>
              </tr>
              <tr className="h-[13px]">
                <td className="pl-px">fk_customersordersi...</td>
                <td className="pl-[2px]">FK</td>
                <td />
                <td className="pl-[3px]">product_id</td>
              </tr>
            </tbody>
          </table>
        </div>
        <VScroll before="h-[5px]" thumb="h-[9px]" after="flex-1" />
      </div>
      <div className="flex min-h-0 flex-1 justify-between">
        <div className="flex w-[168px] flex-col bg-[#d5d5d5] text-[7px] leading-[10px] text-[#222]">
          <div className="flex h-[10px] shrink-0 items-center gap-[4px] overflow-hidden whitespace-nowrap bg-[#bcbcbc] pl-[4px]">
            <svg viewBox="0 0 10 10" className="size-[4px] shrink-0"><path d="M10 0v10H0z" fill="#222" /></svg>
            <span>Constraint (fk_customersordersitems_cu...</span>
          </div>
          <div className="flex min-h-0 flex-1">
            <div className="h-[20px] w-[10px] bg-[#bcbcbc]" />
            <div className="w-[75px] border-r border-[#aaa]">
              <p id="on-delete" className="h-[10px] bg-[#949494] pl-[3px]">On Delete</p>
              <p id="on-update" className="h-[10px] bg-[#c4c4c4] pl-[3px]">On Update</p>
            </div>
            <div className="relative flex-1">
              <select aria-labelledby="on-delete" className="block h-[10px] w-full appearance-none border-b border-[#bbb] pl-[2px]"><option>No Action</option></select>
              <select aria-labelledby="on-update" className="block h-[10px] w-full appearance-none border-b border-[#bbb] pl-[2px]"><option>No Action</option></select>
              <Caret className="pointer-events-none absolute right-1 top-1 w-[4px]" />
            </div>
          </div>
        </div>
        <div className="flex w-[22px] flex-col text-[6px] leading-[6px] text-[#444]">
          <div className="flex h-[12px] shrink-0">
            <button type="button" className="w-[10px] border border-b-0 border-[#333] bg-[#d5d5d5] text-[#888]">...</button>
            <button type="button" className="flex-1 bg-[#a5a5a5] text-[#888]">...</button>
          </div>
          <div className="flex flex-1 border-2 border-[#d5d5d5] bg-[#696969] p-px outline outline-[#555]">
            <div className="w-[11px] bg-[#d5d5d5] text-center">
              <p className="h-[13px] bg-[#a5a5a5] pt-1">..</p>
              <p className="pt-1 text-[#777]">...</p>
            </div>
            <div className="flex flex-1 items-center justify-center bg-[#999] text-[#222]">⋮</div>
          </div>
        </div>
      </div>
    </div>
  </div>
);

const DatabaseBuilder = () => (
  <section className="flex h-[251px] shrink-0 flex-col border-b-[3px] border-[#7c7c7c]">
    <div className="flex h-[19px] shrink-0 items-center justify-between pl-[2px]">
      <h2 className="text-[11px] text-[#333]">Database Builder</h2>
      <PanelButtons />
    </div>
    <div className="flex min-h-0 flex-1 justify-between">
      <div className="min-w-0 flex-1 overflow-hidden bg-[#d5d5d5] text-[7px]">
        <div className="flex h-[227px]"><Tree nodes={DB_TREE} step={11} /></div>
      </div>
      <div className="flex w-[3px] items-center justify-center text-[6px] text-[#444]">⋮</div>
      <ConstraintPane />
    </div>
  </section>
);

const CONCEPTS: { name: string; box: string; path: string; w: number; h: number }[] = [
  { name: 'Customers', box: 'left-[72px] top-[48px] w-[76px] h-[24px]', path: 'M1 .8Q40 2.500 50 1.500T75.500 1V23Q30 24 1 23z', w: 76, h: 24 },
  { name: 'Suppliers', box: 'left-[257px] top-[45px] w-[66px] h-[24px]', path: 'M.8 1.500Q30-.5 65 2V23.500Q45 22 30 22.500T1 23z', w: 66, h: 24 },
  { name: 'Customer Addresses', box: 'left-[10px] top-[114px] w-[84px] h-[23px]', path: 'M.8 .5Q30 2 83.500 1V22Q50 21 30 22T1 22z', w: 84, h: 23 },
  { name: 'Customer Orders', box: 'left-[168px] top-[116px] w-[78px] h-[24px]', path: 'M2 .8Q40 1 77 1.500L76.500 23Q40 21.500 20 22.500T.8 22z', w: 78, h: 24 },
  { name: 'Products', box: 'left-[326px] top-[114px] w-[61px] h-[24px]', path: 'M.8 .8H60V22Q40 21 25 23T1 22z', w: 61, h: 24 },
  { name: 'Customer Orders Statuses', box: 'left-[30px] top-[193px] w-[99px] h-[25px]', path: 'M.8 1Q50 3 98 1.500V23.500Q60 25 40 23.500T1 23.500z', w: 99, h: 25 },
  { name: 'Customer Order Items', box: 'left-[235px] top-[199px] w-[96px] h-[25px]', path: 'M1 .8Q50 2 95 1V22.500Q60 22.500 30 23.500T2 24z', w: 96, h: 25 },
];

const ENDS: [number, number, number, number][] = [
  [99, 77, 63, 109], [126, 78, 190, 112], [301, 75, 345, 109], [189, 145, 99, 189], [218, 145, 272, 193], [347, 144, 293, 193],
];

const ConceptualDiagram = () => (
  <div className="relative min-w-0 flex-1 overflow-hidden bg-white font-bold italic text-black">
    <h3 className="pl-[8px] pt-[9px] font-['Liberation_Sans',sans-serif] text-[10px] leading-[12px]">Conceptual Model</h3>
    <svg className="absolute inset-0 size-full" fill="none" stroke="#666" strokeWidth=".8">
      {ENDS.map(([x1, y1, x2, y2]) => (
        <g key={`${x1}-${x2}`}>
          <path d={`M${x1} ${y1 - 5}v5L${x2} ${y2}v5M${x1 - 3} ${y1 - 2}h6M${x1 - 2} ${y1 - 4}h4`} />
          <circle cx={x2} cy={y2 + 1} r="1.8" fill="#fff" />
          <path d={`M${x2 - 3} ${y2 + 5}l3-3 3 3`} />
        </g>
      ))}
    </svg>
    {CONCEPTS.map(c => (
      <div key={c.name} className={clsx('absolute', c.box)}>
        <svg viewBox={`0 0 ${c.w} ${c.h}`} className="absolute inset-0 size-full">
          <path d={c.path} fill="#fffaf7" stroke="#666" strokeWidth=".9" />
        </svg>
        <p className="relative whitespace-nowrap pr-[6px] pt-[3px] text-center text-[7px] leading-[8px]">{c.name}</p>
      </div>
    ))}
  </div>
);

const ConceptualPanel = () => (
  <section className="flex min-h-0 flex-1 flex-col">
    <div className="flex h-[22px] shrink-0 items-center justify-between pl-[2px]">
      <h2 className="text-[11px] text-[#2b579a]">Conceptual Data Model</h2>
      <PanelButtons />
    </div>
    <div className="flex h-[13px] shrink-0 items-center pl-[11px] text-[7px] text-[#858585]">
      <Icon name="diagram" />Class Diagram: &quot;Conceptual Data Model&quot;
    </div>
    <div className="flex min-h-0 flex-1">
      <ConceptualDiagram />
      <VScroll thumb="flex-[133]" after="flex-[86]" />
    </div>
    <div className="bg-[#6e6e6e]"><HScroll thumb="flex-[255]" after="flex-[116]" /></div>
    <div className="flex h-[13px] shrink-0 items-start text-[7px] text-[#1e1e1e]">
      <button type="button" className="flex h-[13px] items-center gap-[2px] border-r border-[#444] pl-[3px] pr-[3px]">
        <svg viewBox="0 0 20 20" className="size-[9px]"><path d="M3 3h8l6 8-6 6-8-8z" fill="#dfe9fb" stroke="#4b6fc4" strokeWidth="1.5" /><circle cx="12" cy="13" r="5" fill="#6d94e0" /></svg>
        Tagged Values
      </button>
      <button type="button" className="flex h-[13px] items-center gap-px border-b border-r border-[#444] bg-[#d5d5d5] pl-[2px] pr-[3px]">
        <Icon name="diagram" />Conceptual Data Model
      </button>
    </div>
  </section>
);

const StatusBar = () => (
  <footer className="flex h-[14px] shrink-0 items-center justify-between bg-[#535353] pl-[3px] pr-[17px] pt-[2px] text-[7px] text-[#d0d0d0]">
    <p className="flex gap-1">
      <span>Class Diagram:Conceptual Data Model:</span>
      <span>created: 29/04/2015</span>
      <span>modified: 13/09/2016 1:11:01 PM</span>
      <span>56%</span>
      <span>827 x 1169</span>
    </p>
    <div className="flex items-center gap-3 text-[#8a8a8a]">
      <div className="flex items-center gap-[5px]">
        <span>−</span>
        <input
          type="range"
          aria-label="Zoom"
          defaultValue={0}
          className="h-px w-[53px] appearance-none bg-[#8a8a8a] [&::-webkit-slider-thumb]:h-[8px] [&::-webkit-slider-thumb]:w-[2px] [&::-webkit-slider-thumb]:appearance-none [&::-webkit-slider-thumb]:bg-[#d5d5d5]"
        />
        <span>+</span>
      </div>
      <span>CAP</span><span>NUM</span><span>SCRL</span><span>CLOUD</span>
    </div>
  </footer>
);

export default function App() {
  return (
    <div className="flex h-screen flex-col bg-white pb-[2px] pl-[2px] pr-px font-['Noto_Sans',sans-serif]">
      <Header />
      <div className="flex min-h-0 flex-1 flex-col bg-[#a9a9a9]">
        <Ribbon />
        <div className="flex min-h-0 flex-1 pt-[2px]">
          <SideTabs />
          <ProjectBrowser />
          <div className="w-[3px] shrink-0" />
          <DocumentArea />
          <div className="w-[3px] shrink-0 border-x border-[#7c7c7c]" />
          <div className="flex w-[400px] shrink-0 flex-col">
            <DatabaseBuilder />
            <ConceptualPanel />
          </div>
          <aside className="flex w-[18px] shrink-0 items-start justify-between pl-px pt-[5px] text-[6px]">
            <button type="button" className="leading-[10px] text-[#333] [writing-mode:vertical-rl]">Start</button>
            <span className="h-[15px] w-[4px] bg-[#999]" />
          </aside>
        </div>
      </div>
      <StatusBar />
    </div>
  );
}
